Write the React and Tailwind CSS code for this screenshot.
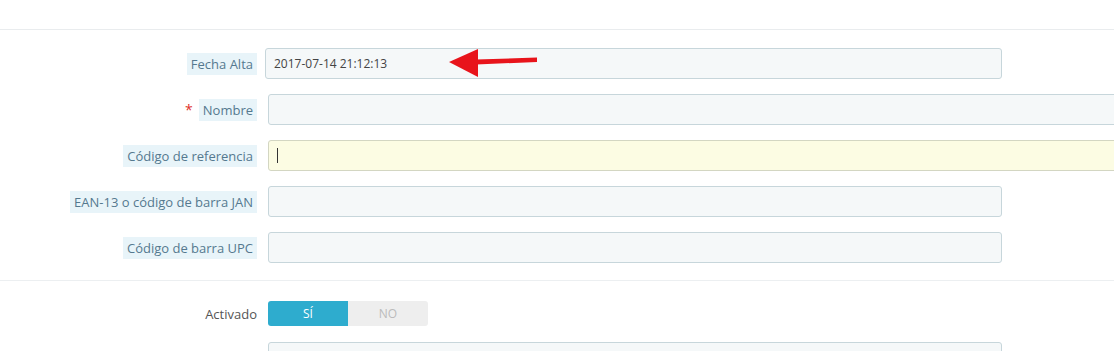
import React from 'react';

// Product form — "Información" block, PrestaShop-style
const font = { fontFamily: '"Open Sans", "Liberation Sans", sans-serif' };

const Label = ({ children, required, hint = true }) => (
  <div className="w-[257px] flex justify-end items-center shrink-0">
    {required && <span className="text-[#e0342b] text-[14px] mr-[6px] leading-none">*</span>}
    {hint ? (
      <span className="bg-[#e8f4f9] text-[#55798f] text-[13px] leading-[22px] px-[4px]">{children}</span>
    ) : (
      <span className="text-[#555] text-[13px] leading-[22px]">{children}</span>
    )}
  </div>
);

const Field = ({ label, required, wide, yellow, value, cursor, offset = 'ml-[11px]', width = 'w-[734px]' }) => (
  <div className="flex items-center mb-[15px]">
    <Label required={required}>{label}</Label>
    <div
      className={`${offset} h-[31px] shrink-0 rounded-[3px] border flex items-center px-[8px] text-[12px] text-[#444] ${
        wide ? 'w-[870px]' : width
      } ${yellow ? 'bg-[#fcfce3] border-[#d3d6c2]' : 'bg-[#f5f8f9] border-[#c7d6db]'}`}
    >
      {value}
      {cursor && <span className="w-px h-[15px] bg-[#333]" />}
    </div>
  </div>
);

export default function App() {
  return (
    <div className="w-[1114px] h-[351px] overflow-hidden bg-white relative" style={font}>
      <div className="h-[30px] border-b border-[#e9ecee]" />

      <div className="pt-[18px] pb-[2px]">
        <Field label="Fecha Alta" value="2017-07-14 21:12:13" offset="ml-[8px]" width="w-[737px]" />
        <Field label="Nombre" required wide />
        <Field label="Código de referencia" wide yellow cursor />
        <Field label="EAN-13 o código de barra JAN" />
        <Field label="Código de barra UPC" />
      </div>

      <div className="border-t border-[#eceff1]" />

      <div className="pt-[20px]">
        <div className="flex items-center">
          <Label hint={false}>Activado</Label>
          <div className="ml-[11px] flex h-[25px] w-[160px] rounded-[3px] overflow-hidden text-[12px]">
            <div className="w-1/2 bg-[#2eacce] text-white flex items-center justify-center">SÍ</div>
            <div className="w-1/2 bg-[#eeeeee] text-[#bbbbbb] flex items-center justify-center">NO</div>
          </div>
        </div>
        <div className="flex mt-[16px]">
          <div className="w-[257px] shrink-0" />
          <div className="ml-[11px] w-[734px] h-[31px] rounded-[3px] border border-[#c7d6db] bg-[#f5f8f9]" />
        </div>
      </div>

      {/* annotation arrow */}
      <svg className="absolute left-[446px] top-[48px]" width="96" height="32" viewBox="0 0 96 32">
        <polygon points="3,14 32,1 32,29" fill="#e8141b" />
        <polygon points="30,11.5 91,9.5 91,14 30,16.5" fill="#e8141b" />
      </svg>
    </div>
  );
}
